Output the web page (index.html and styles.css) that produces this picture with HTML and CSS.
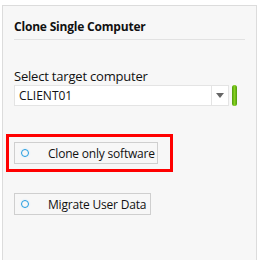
FILE: index.html
```html
<!DOCTYPE html>
<html lang="en">
<head>
  <meta charset="UTF-8" />
  <title>Clone Single Computer</title>
  <link rel="stylesheet" href="styles.css">
</head>
<body>

  <div class="panel">
    <div class="title">Clone Single Computer</div>

    <div class="label">Select target computer</div>
    <div class="combo-row">
      <div class="combo">
        <span class="combo-value">CLIENT01</span>
        <span class="combo-arrow"><svg width="8" height="5" viewBox="0 0 8 5"><path d="M0 0h8L4 5z" fill="#666"/></svg></span>
      </div>
      <div class="status"></div>
    </div>

    <div class="highlight">
      <div class="option software"><span class="radio"></span>Clone only software</div>
    </div>

    <div class="option migrate"><span class="radio"></span>Migrate User Data</div>
  </div>

</body>
</html>
```

FILE: styles.css
```css
body {
  margin: 0;
  background: #fff;
  font-family: "Open Sans", "Noto Sans", sans-serif;
  font-size: 12px;
  color: #111;
}

.panel {
  margin: 5px 3px 0 2px;
  height: 255px;
  box-sizing: border-box;
  background: #f7f7f7;
  border: 1px solid #dcdcdc;
  border-bottom: none;
  padding: 12px 11px 0 11px;
}

.title {
  font-weight: bold;
  font-size: 12px;
  letter-spacing: -0.2px;
  padding-bottom: 4px;
  border-bottom: 1px solid #e2e2e2;
}

.label {
  margin-top: 27px;
  font-size: 13px;
  line-height: 18px;
  letter-spacing: -0.2px;
}

.combo-row {
  display: flex;
  align-items: center;
  gap: 3px;
}

.combo {
  width: 215px;
  height: 21px;
  box-sizing: border-box;
  display: flex;
  background: #fff;
  border: 1px solid #e4e4e4;
}

.combo-value {
  flex: 1;
  padding-left: 4px;
  line-height: 19px;
  font-size: 12px;
}

.combo-arrow {
  width: 16px;
  border-left: 1px solid #e4e4e4;
  display: flex;
  align-items: center;
  justify-content: center;
}

.status {
  width: 5px;
  height: 21px;
  border-radius: 3px;
  background: linear-gradient(90deg, #4e9a0e, #86d11f 50%, #4e9a0e);
}

.highlight {
  margin: 28px 0 0 -8px;
  width: 167px;
  height: 38px;
  box-sizing: border-box;
  border: 3px solid #f00;
  padding: 5px 0 0 5px;
}

.option {
  display: flex;
  align-items: center;
  height: 22px;
  box-sizing: border-box;
  border: 1px solid #cfcfcf;
  padding-left: 6px;
  font-size: 12px;
  letter-spacing: -0.2px;
  white-space: nowrap;
}

.software {
  width: 144px;
}

.migrate {
  width: 137px;
  margin-top: 21px;
}

.radio {
  flex: none;
  width: 6px;
  height: 6px;
  border: 1.5px solid #1f9be0;
  border-radius: 50%;
  margin-right: 19px;
  box-shadow: 0 0 1px 1px #e8f2fa;
}
```
